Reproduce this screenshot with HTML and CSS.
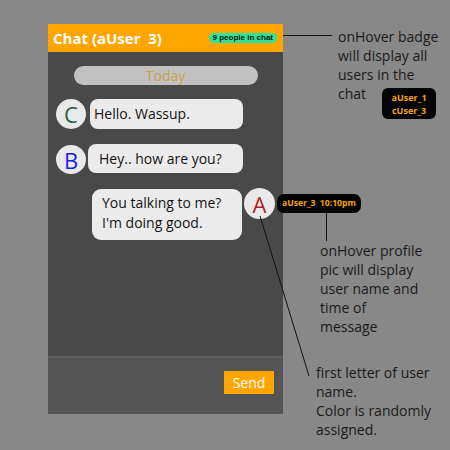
FILE: index.html
```html
<!DOCTYPE html>
<html>
<head>
<meta charset="utf-8">
<link rel="stylesheet" href="styles.css">
</head>
<body>
<div class="page">
  <div class="panel">
    <div class="header">
      <span class="title">Chat (aUser&nbsp; 3)</span>
      <span class="count-badge">9 people in chat</span>
    </div>
    <div class="chat-body">
      <div class="today">Today</div>
      <div class="msg msg-one">
        <div class="avatar avatar-c">C</div>
        <div class="bubble bubble-one">Hello. Wassup.</div>
      </div>
      <div class="msg msg-two">
        <div class="avatar avatar-b">B</div>
        <div class="bubble bubble-two">Hey.. how are you?</div>
      </div>
      <div class="msg msg-mine">
        <div class="bubble bubble-mine">You talking to me?<br>I'm doing good.</div>
        <div class="avatar avatar-a">A
          <div class="tooltip">aUser_3&nbsp; 10:10pm</div>
        </div>
      </div>
    </div>
    <div class="divider"></div>
    <div class="composer">
      <button class="send">Send</button>
    </div>
  </div>
  <div class="notes">
    <div class="note note-badge">
      onHover badge<br>will display all<br>users in the
      <div class="note-last">
        <span>chat</span>
        <div class="users-pop">aUser_1<br>cUser_3</div>
      </div>
    </div>
    <div class="note note-pic">onHover profile<br>pic will display<br>user name and<br>time of<br>message</div>
    <div class="note note-letter">first letter of user<br>name.<br>Color is randomly<br>assigned.</div>
  </div>
  <svg class="leaders" width="450" height="450" viewBox="0 0 450 450">
    <line x1="283" y1="35.5" x2="332" y2="35.5"/>
    <line x1="326.5" y1="212" x2="326.5" y2="241"/>
    <line x1="260" y1="216" x2="309" y2="376"/>
  </svg>
</div>
</body>
</html>
```

FILE: styles.css
```css
* { box-sizing: border-box; }
html, body {
  margin: 0;
  padding: 0;
  background: #888888;
  font-family: "Open Sans", "Noto Sans", sans-serif;
}
.page {
  position: relative;
  width: 450px;
  height: 450px;
  display: flex;
  align-items: flex-start;
  padding: 24px 0 0 48px;
}
.panel {
  width: 235px;
  height: 390px;
  display: flex;
  flex-direction: column;
  background: #494949;
}
.header {
  height: 28px;
  background: #ffa500;
  display: flex;
  align-items: center;
  justify-content: space-between;
  padding: 0 6px 0 5px;
}
.title {
  color: #ffffff;
  font-weight: 700;
  font-size: 15px;
  white-space: pre;
}
.count-badge {
  height: 10px;
  line-height: 10px;
  padding: 0 4px;
  border-radius: 5px;
  background: #2ee39c;
  color: #111;
  font-family: "Liberation Sans", Arial, sans-serif;
  font-weight: 700;
  font-size: 8px;
  letter-spacing: 0;
}
.chat-body {
  flex: 1;
  display: flex;
  flex-direction: column;
  padding-top: 14px;
}
.today {
  align-self: center;
  width: 184px;
  height: 19px;
  border-radius: 10px;
  background: #c1c1c1;
  color: #c9a04a;
  font-size: 14px;
  line-height: 19px;
  text-align: center;
}
.msg {
  display: flex;
  align-items: flex-start;
}
.msg-one { margin: 14px 0 0 8px; }
.msg-two { margin: 15px 0 0 8px; }
.msg-mine { margin: 14px 8px 0 0; justify-content: flex-end; }
.avatar {
  position: relative;
  width: 30px;
  height: 30px;
  border-radius: 50%;
  background: #e9e9e9;
  display: flex;
  align-items: center;
  justify-content: center;
  font-size: 22px;
  line-height: 1;
  flex-shrink: 0;
}
.avatar-c { color: #2c5a48; }
.avatar-b { color: #1c1ce8; height: 29px; margin-top: 1px; }
.avatar-a { color: #b01e2a; width: 31px; height: 31px; }
.bubble {
  background: #ebebeb;
  color: #141414;
  font-size: 14px;
  border-radius: 8px;
}
.bubble-one {
  margin-left: 4px;
  width: 153px;
  height: 30px;
  line-height: 30px;
  padding-left: 4px;
}
.bubble-two {
  margin-left: 2px;
  width: 155px;
  height: 29px;
  line-height: 29px;
  padding-left: 11px;
}
.bubble-mine {
  margin-top: 1px;
  margin-right: 2px;
  width: 150px;
  height: 51px;
  line-height: 20px;
  padding: 4px 10px 0 10px;
  border-radius: 9px;
}
.tooltip {
  position: absolute;
  left: 33px;
  top: 6px;
  height: 19px;
  padding: 0 5px;
  border-radius: 7px;
  background: #050505;
  color: #f5a300;
  font-weight: 700;
  font-size: 8.6px;
  line-height: 19px;
  white-space: pre;
}
.divider {
  height: 2px;
  background: #5e5e5e;
}
.composer {
  height: 56px;
  background: #545454;
  display: flex;
  justify-content: flex-end;
  align-items: flex-start;
  padding: 13px 9px 0 0;
}
.send {
  width: 50px;
  height: 23px;
  border: none;
  background: #ffa500;
  color: #ffffff;
  font-family: "Open Sans", sans-serif;
  font-size: 14px;
  padding: 0;
}
.notes {
  display: flex;
  flex-direction: column;
  padding-left: 33px;
  color: #1a1a1a;
  font-size: 14px;
  line-height: 19px;
  white-space: nowrap;
}
.note-badge { margin: 3px 0 0 22px; }
.note-last {
  display: flex;
  align-items: flex-start;
}
.users-pop {
  margin: 4px 0 0 16px;
  width: 54px;
  height: 31px;
  border-radius: 6px;
  background: #050505;
  color: #f5a300;
  font-weight: 700;
  font-size: 9px;
  line-height: 13px;
  display: flex;
  align-items: center;
  justify-content: center;
  text-align: center;
}
.note-pic { margin: 122px 0 0 4px; }
.note-letter { margin: 27px 0 0 0; }
.leaders {
  position: absolute;
  left: 0;
  top: 0;
  pointer-events: none;
}
.leaders line {
  stroke: #111;
  stroke-width: 1;
}
```
